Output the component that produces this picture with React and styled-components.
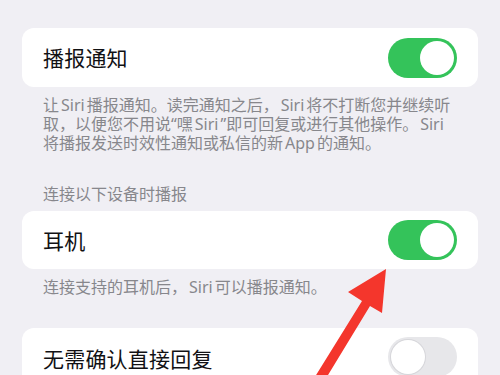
import React from 'react';
import styled, { createGlobalStyle } from 'styled-components';

const GlobalStyle = createGlobalStyle`
    html, body {
        margin: 0;
        padding: 0;
        background: #f0eff4;
        overflow: hidden;
    }
    body {
        font-family: "Noto Sans CJK SC", "Noto Sans", sans-serif;
    }
`;

const Page = styled.div`
    position: relative;
    width: 500px;
    height: 375px;
    overflow: hidden;
    background: #f0eff4;
    padding: 28px 22px 0;
    box-sizing: border-box;
    display: flex;
    flex-direction: column;
`;

const Card = styled.div`
    background: #ffffff;
    border-radius: 12px;
    height: ${(p) => p.$h || 59}px;
    flex-shrink: 0;
    display: flex;
    align-items: center;
    justify-content: space-between;
    padding: 0 21px;
    box-sizing: border-box;
`;

const LastCard = styled(Card)`
    margin-top: 32px;
    align-items: flex-start;
    padding-top: 9px;
`;

const Title = styled.div`
    font-size: 21px;
    line-height: 1;
    color: #111114;
    letter-spacing: 0.2px;
`;

const LastTitle = styled(Title)`
    margin-top: 11px;
`;

const Note = styled.div`
    font-size: 16px;
    line-height: 19px;
    height: ${(p) => p.$lines * 19}px;
    color: #87878c;
    white-space: nowrap;
    flex-shrink: 0;
    padding: ${(p) => p.$pad || '0 21px'};
`;

const Header = styled(Note)`
    padding: 32px 21px 8px;
`;

const Latin = styled.span`
    font-family: "Noto Sans", sans-serif;
    line-height: 1;
    margin: 0 ${(p) => p.$gap ?? 2}px;
`;

const Track = styled.div`
    width: 69px;
    height: 40px;
    border-radius: 20px;
    background: ${(p) => (p.$on ? '#34c35a' : '#e7e7ea')};
    display: flex;
    align-items: center;
    justify-content: ${(p) => (p.$on ? 'flex-end' : 'flex-start')};
    padding: 0 3px;
    box-sizing: border-box;
`;

const Knob = styled.div`
    width: 34px;
    height: 34px;
    border-radius: 50%;
    background: #ffffff;
    box-shadow: ${(p) => (p.$on ? 'none' : '0 0 0 1px #d6d6da')};
`;

const Arrow = styled.svg`
    position: absolute;
    left: 0;
    top: 0;
    pointer-events: none;
`;

const Toggle = ({ on }) => (
    <Track $on={on}>
        <Knob $on={on} />
    </Track>
);

export default function App() {
    return (
        <>
            <GlobalStyle />
            <Page>
                <Card>
                    <Title>播报通知</Title>
                    <Toggle on />
                </Card>
                <Note $lines={3} $pad="8px 21px 0">
                    让<Latin>Siri</Latin>播报通知。读完通知之后，<Latin>Siri</Latin>将不打断您并继续听
                    <br />
                    取，以便您不用说<Latin $gap={0}>“</Latin>嘿<Latin>Siri</Latin><Latin $gap={0}>”</Latin>即可回复或进行其他操作。<Latin>Siri</Latin>
                    <br />
                    将播报发送时效性通知或私信的新<Latin>App</Latin>的通知。
                </Note>
                <Header $lines={1}>连接以下设备时播报</Header>
                <Card $h={58}>
                    <Title>耳机</Title>
                    <Toggle on />
                </Card>
                <Note $lines={1} $pad="8px 21px 0">连接支持的耳机后，<Latin>Siri</Latin>可以播报通知。</Note>
                <LastCard $h={70}>
                    <LastTitle>无需确认直接回复</LastTitle>
                    <Toggle on={false} />
                </LastCard>
                <Arrow width="500" height="375" viewBox="0 0 500 375">
                    <polygon
                        points="386,269 348,292 362,301 313,380 325,380 370,306 382,313"
                        fill="#f4362c"
                    />
                </Arrow>
            </Page>
        </>
    );
}
